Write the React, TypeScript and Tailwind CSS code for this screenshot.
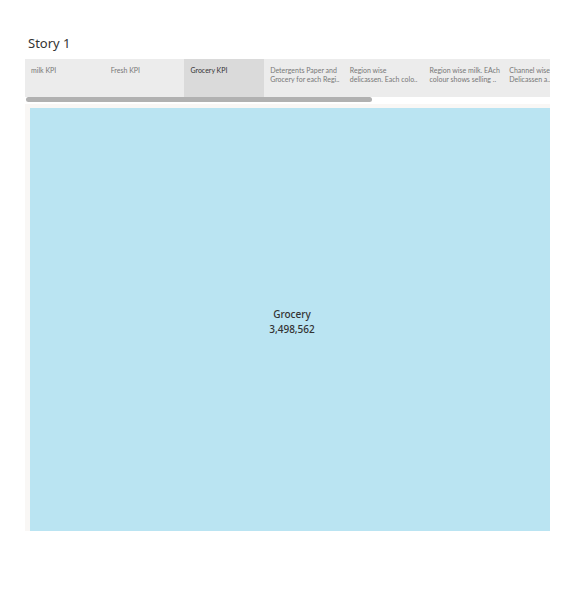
import { useState } from 'react';

const points = [
  ['milk KPI'],
  ['Fresh KPI'],
  ['Grocery KPI'],
  ['Detergents Paper and', 'Grocery for each Regi..'],
  ['Region wise', 'delicassen. Each colo..'],
  ['Region wise milk. EAch', 'colour shows selling ..'],
  ['Channel wise', 'Delicassen a..'],
];

export default function App() {
  const [active, setActive] = useState(2);

  return (
    <main className="pt-[35px] pr-7 pl-[25px] font-['Noto_Sans',sans-serif]">
      <h1 className="h-6 pl-[3px] text-[13px] leading-4 text-[#333333]">Story 1</h1>

      <nav aria-label="Story points" className="overflow-hidden bg-[#ececec]">
        <div className="grid h-[38px] w-[558px] grid-cols-7 font-[Lato,sans-serif]">
          {points.map((lines, index) => (
            <button
              key={lines[0]}
              type="button"
              aria-pressed={index === active}
              onClick={() => setActive(index)}
              className={
                index === active
                  ? 'flex flex-col bg-[#dadada] pt-[7px] pl-[6px] text-left text-[7px] leading-[9px] whitespace-nowrap text-[#333333]'
                  : 'flex flex-col pt-[7px] pl-[6px] text-left text-[7px] leading-[9px] whitespace-nowrap text-[#777777]'
              }
            >
              {lines.map((line) => (
                <span key={line}>{line}</span>
              ))}
            </button>
          ))}
        </div>
      </nav>

      <div className="h-[7px] pl-px">
        <div className="h-[5px] w-[66%] rounded-full bg-[#b1b1b1]" />
      </div>

      <section aria-label="Grocery KPI" className="bg-[#f9f7f5] pt-1 pl-[5px]">
        <div className="flex h-[423px] flex-col items-center justify-center bg-[#bae4f2] pt-1 pl-1 text-[10px] leading-[15px] font-medium text-[#333333]">
          <p>Grocery</p>
          <p>3,498,562</p>
        </div>
      </section>
    </main>
  );
}
